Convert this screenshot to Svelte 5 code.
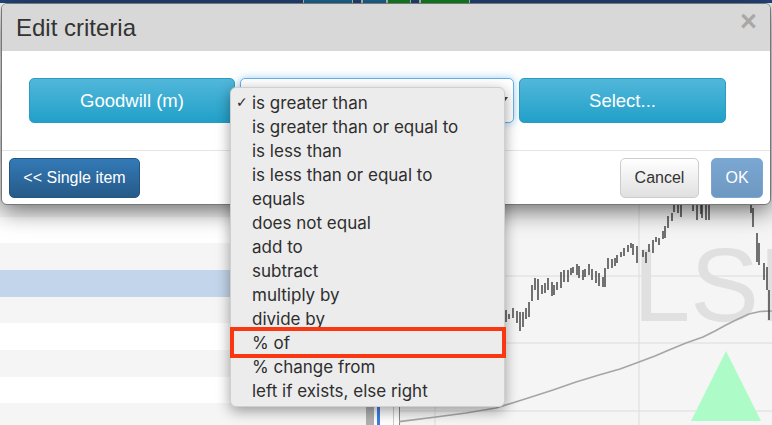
<script>
  const operators = [
    'is greater than',
    'is greater than or equal to',
    'is less than',
    'is less than or equal to',
    'equals',
    'does not equal',
    'add to',
    'subtract',
    'multiply by',
    'divide by',
    '% of',
    '% change from',
    'left if exists, else right'
  ];

  const stripes = [
    [0, 303, 'navy'], [304, 48, 'teal'], [353, 8, 'navy'], [363, 23, 'teal'],
    [388, 22, 'green'], [411, 8, 'navy'], [421, 48, 'green'], [470, 302, 'navy']
  ];

  const rows = Array.from({ length: 16 }, (_, i) => i);

  // x, top, bottom of each price bar
  const bars = [
    [506,310,322],[509,314,319],[513,308,318],[517,311,323],[520,312,331],[523,312,327],[526,308,319],
    [529,302,317],[532,285,301],[535,278,290],[538,279,300],[542,285,294],[545,283,293],[548,278,290],
    [552,282,296],[554,285,295],[557,282,290],[561,272,288],[564,270,282],[568,270,282],[571,268,275],
    [573,267,273],[577,264,275],[579,266,278],[583,270,280],[585,269,277],[589,264,275],[592,269,280],
    [596,271,283],[599,273,286],[603,277,287],[605,268,287],[608,258,269],[612,259,268],[615,258,266],
    [617,255,263],[621,252,257],[624,248,256],[628,245,252],[631,243,248],[633,244,255],[637,246,263],
    [643,250,257],[646,252,263],[649,244,252],[653,240,253],[656,237,242],[659,238,245],[663,231,239],
    [665,226,238],[668,216,228],[672,213,221],[674,205,212],[678,205,213],[681,205,217],[693,205,211],
    [697,205,220],[701,205,214],[702,205,218],[706,205,220],[709,205,220],[751,205,213],[753,208,227],
    [757,233,262],[759,243,265],[764,263,280],[767,267,290],[769,290,320]
  ];

  const average = '399,421.7 436,417 466,413 496,408 525,399 553,390 576,382 599,375 620,369 639,362 655,356 669,350 686,343 703,337 715,331 726,325 738,319 749,314 760,311.5 772,311';
</script>

<main class="page">
  <div class="topbar">
    {#each stripes as [x, w, tone]}
      <span class={tone} style="left:{x}px;width:{w}px"></span>
    {/each}
  </div>

  <div class="content">
    <div class="rows">
      {#each rows as i}
        <div class="row" class:odd={i % 2 === 1} class:selected={i === 10}></div>
      {/each}
    </div>

    <svg class="chart" viewBox="362 3 410 422" width="410" height="422">
      <rect x="362" y="3" width="410" height="422" fill="#f5f5f5" />
      <rect x="366" y="3" width="8" height="422" fill="#b0b0b0" />
      <rect x="374" y="3" width="3" height="422" fill="#fff" />
      <rect x="377" y="3" width="3" height="422" fill="#3c7de2" />
      <rect x="380" y="3" width="19" height="422" fill="#fff" />
      <rect x="393" y="3" width="1" height="422" fill="#ccc" />
      <rect x="399" y="3" width="1" height="422" fill="#888" />
      <g stroke="#dcdcdc" stroke-width="1">
        <path d="M400 276H772M400 343H772M400 411H772M435 3V425M639 3V425" fill="none" />
      </g>
      <text x="633" y="321" class="watermark">LSE</text>
      <polygon points="726,351 761,421 691,421" fill="#adfcc8" />
      <polyline points={average} fill="none" stroke="#a6a6a6" stroke-width="1.7" stroke-linejoin="round" />
      <g stroke="#3a3a3a" stroke-width="1.4">
        {#each bars as [x, top, bottom]}
          <line x1={x} x2={x} y1={top} y2={bottom} />
        {/each}
      </g>
    </svg>
  </div>

  <section class="modal">
    <header>
      <h4>Edit criteria</h4>
      <span class="close">×</span>
    </header>

    <div class="body">
      <button class="info wide">Goodwill (m)</button>
      <div class="select">
        <svg width="7" height="5" viewBox="0 0 7 5"><path d="M0 0H7L3.500 5Z" fill="#444" /></svg>
      </div>
      <button class="info pick">Select...</button>
    </div>

    <footer>
      <button class="single">&lt;&lt; Single item</button>
      <div class="spacer"></div>
      <button class="cancel">Cancel</button>
      <button class="ok">OK</button>
    </footer>
  </section>

  <ul class="menu">
    {#each operators as op, i}
      <li class:marked={op === '% of'}>
        {#if i === 0}<span class="check">✓</span>{/if}
        {op}
      </li>
    {/each}
  </ul>
</main>

<style>
  :global(body) {
    margin: 0;
    background: #fff;
  }

  .page {
    position: relative;
    width: 772px;
    height: 425px;
    overflow: hidden;
    font-family: "Liberation Sans", Arial, sans-serif;
    color: #333;
  }

  .topbar {
    position: relative;
    height: 3px;
    background: #c8c8c8;
  }

  .topbar span {
    position: absolute;
    top: 0;
    height: 3px;
  }

  .navy { background: #23477f; }
  .teal { background: #1b6a9c; }
  .green { background: #138a24; }

  .content {
    display: flex;
    height: 422px;
  }

  .rows {
    width: 362px;
    flex: none;
  }

  .row {
    height: 26.7px;
    background: #fff;
  }

  .row.odd {
    background: #f5f5f5;
  }

  .row.selected {
    background: #c3d5ea;
  }

  .chart {
    display: block;
    flex: none;
  }

  .watermark {
    font-family: "Liberation Sans", Arial, sans-serif;
    font-size: 103px;
    fill: #e0e0e0;
  }

  .modal {
    position: absolute;
    left: 1px;
    top: 3px;
    width: 770px;
    height: 202px;
    box-sizing: border-box;
    display: flex;
    flex-direction: column;
    background: #fff;
    border: 1px solid #777;
    border-radius: 6px;
    box-shadow: 0 5px 24px rgba(0, 0, 0, 0.6);
    overflow: hidden;
  }

  header {
    height: 47px;
    flex: none;
    display: flex;
    align-items: center;
    justify-content: space-between;
    padding: 0 14px;
    background: #d8d8d8;
  }

  h4 {
    margin: 0;
    font-size: 24px;
    font-weight: 400;
    color: #333;
  }

  .close {
    font-size: 29px;
    font-weight: 700;
    line-height: 1;
    color: #a8a8a8;
    margin: -12px -1px 0 0;
  }

  .body {
    height: 99px;
    flex: none;
    box-sizing: border-box;
    display: flex;
    gap: 5px;
    padding: 27px 0 0 27px;
  }

  button {
    font-family: "Liberation Sans", Arial, sans-serif;
    border-radius: 5px;
    padding: 0;
  }

  .info {
    height: 45px;
    font-size: 18.5px;
    color: #fff;
    border: 1px solid #2a9cc2;
    background: linear-gradient(#52b7da, #21a0c9);
  }

  .wide {
    width: 206px;
  }

  .pick {
    width: 207px;
  }

  .select {
    width: 274px;
    height: 45px;
    box-sizing: border-box;
    display: flex;
    align-items: center;
    justify-content: flex-end;
    padding: 0 5px 3px 0;
    background: #fff;
    border: 1px solid #66afe9;
    border-radius: 5px;
    box-shadow: 0 0 8px rgba(102, 175, 233, 0.6);
  }

  footer {
    flex: 1;
    display: flex;
    align-items: flex-start;
    padding: 7px 7px 0 7px;
    border-top: 1px solid #e5e5e5;
  }

  footer button {
    height: 40px;
    font-size: 16px;
  }

  .spacer {
    flex: 1;
  }

  .single {
    width: 131px;
    color: #fff;
    border: 1px solid #245580;
    background: linear-gradient(#337ab7, #265a88);
  }

  .cancel {
    width: 79px;
    color: #333;
    border: 1px solid #ccc;
    background: linear-gradient(#fff, #e0e0e0);
    margin-right: 12px;
  }

  .ok {
    width: 52px;
    color: #fff;
    border: 1px solid #7ba6d2;
    background: linear-gradient(#7ba7d3, #6c98c1);
  }

  .menu {
    position: absolute;
    left: 230px;
    top: 87px;
    width: 275px;
    height: 320px;
    box-sizing: border-box;
    margin: 0;
    padding: 3px 0 0 21px;
    list-style: none;
    background: #ececec;
    border: 1px solid #cfcfcf;
    border-radius: 6px;
    box-shadow: 0 4px 14px rgba(0, 0, 0, 0.38);
    font-family: Inter, "Liberation Sans", sans-serif;
    font-size: 17px;
    color: #2e2e2e;
  }

  .menu li {
    position: relative;
    height: 24px;
    line-height: 24px;
    white-space: nowrap;
  }

  .check {
    position: absolute;
    left: -16px;
    top: -1px;
    font-family: "DejaVu Sans", sans-serif;
    font-size: 14px;
  }

  .marked::after {
    content: "";
    position: absolute;
    left: -22px;
    right: -2px;
    top: -4px;
    bottom: -3px;
    border: 4px solid #f93812;
  }
</style>
